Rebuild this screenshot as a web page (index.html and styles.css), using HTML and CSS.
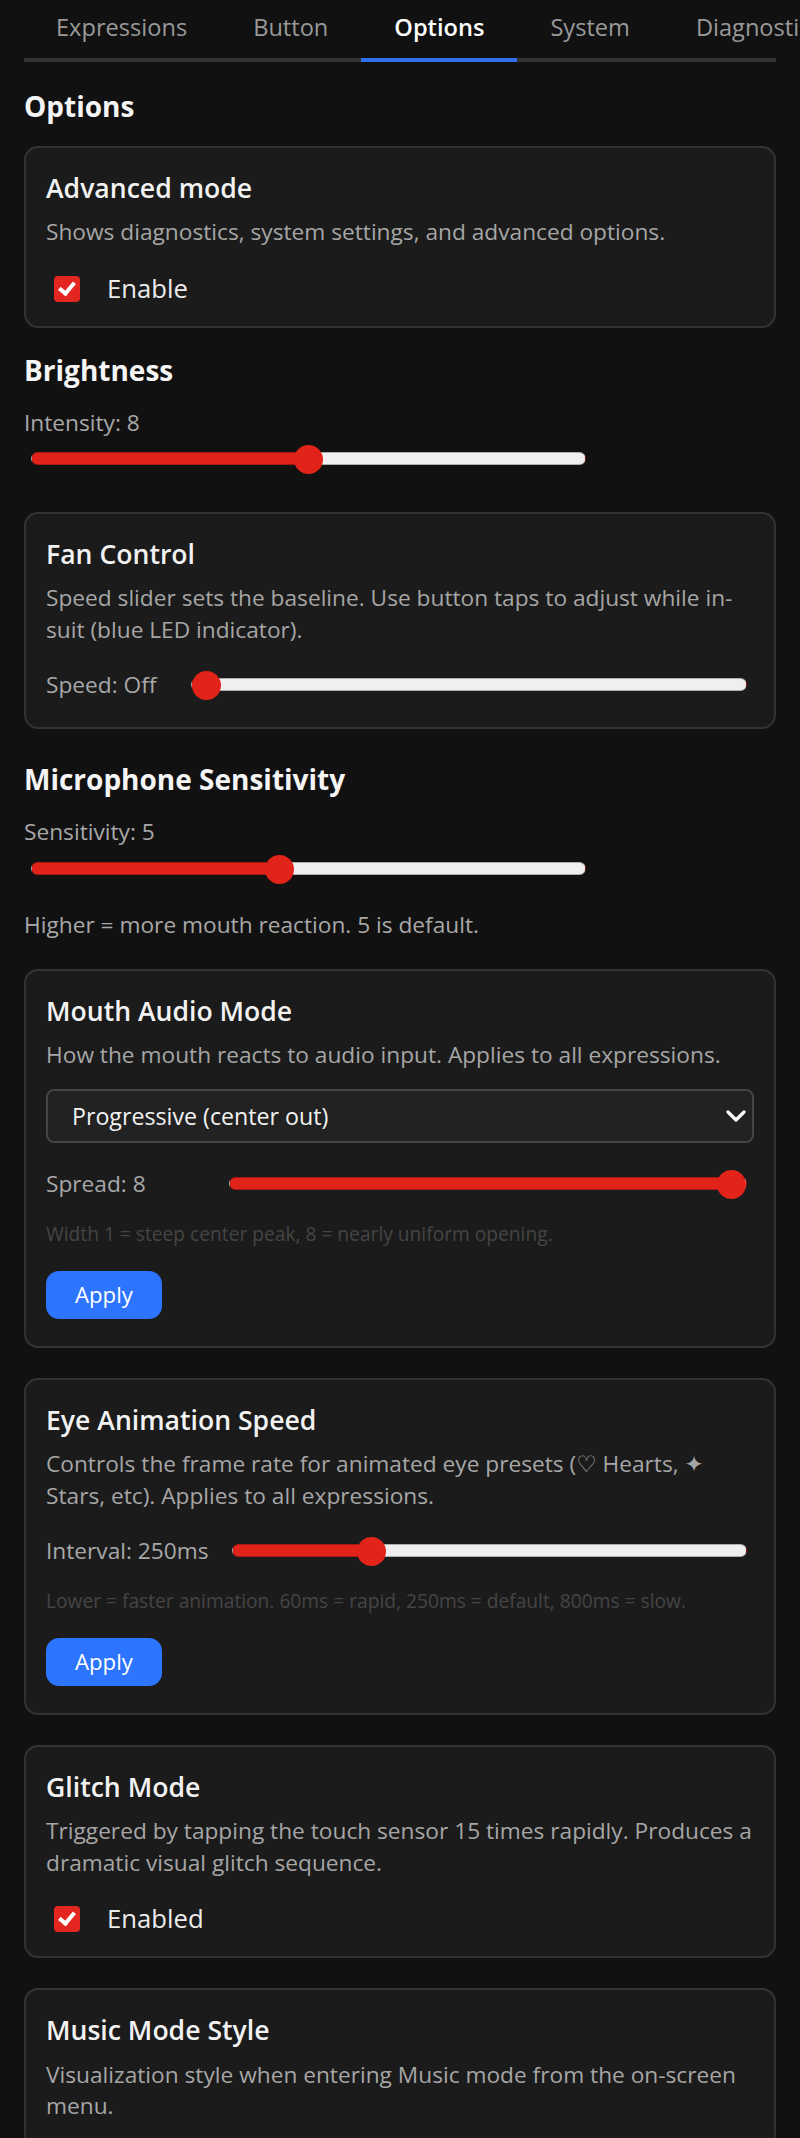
FILE: index.html
```html
<!DOCTYPE html>
<html lang="en">
<head>
    <meta charset="UTF-8">
    <meta name="viewport" content="width=device-width, initial-scale=1.0">
    <title>Options</title>
    <link rel="stylesheet" href="styles.css">
</head>
<body>
    <div class="page">
        <nav class="tabs">
            <a class="tab">Expressions</a>
            <a class="tab">Button</a>
            <a class="tab active">Options</a>
            <a class="tab">System</a>
            <a class="tab">Diagnostics</a>
        </nav>

        <h2 class="section-title page-head">Options</h2>

        <div class="card">
            <h3 class="card-title">Advanced mode</h3>
            <p class="desc">Shows diagnostics, system settings, and advanced options.</p>
            <label class="check-row">
                <input type="checkbox" class="check" checked>
                <span>Enable</span>
            </label>
        </div>

        <section class="group group-brightness">
            <h2 class="section-title">Brightness</h2>
            <div class="label">Intensity: <span>8</span></div>
            <input type="range" class="range range-wide" min="1" max="15" value="8">
        </section>

        <div class="card card-fan">
            <h3 class="card-title">Fan Control</h3>
            <p class="desc">Speed slider sets the baseline. Use button taps to adjust while in-suit (blue LED indicator).</p>
            <div class="slider-row">
                <span class="label label-fan">Speed: Off</span>
                <input type="range" class="range" min="0" max="3" value="0">
            </div>
        </div>

        <section class="group group-mic">
            <h2 class="section-title">Microphone Sensitivity</h2>
            <div class="label">Sensitivity: <span>5</span></div>
            <input type="range" class="range range-wide" min="1" max="10" value="5">
            <p class="label note">Higher = more mouth reaction. 5 is default.</p>
        </section>

        <div class="card card-mouth">
            <h3 class="card-title">Mouth Audio Mode</h3>
            <p class="desc">How the mouth reacts to audio input. Applies to all expressions.</p>
            <div class="select-wrap">
                <select class="select">
                    <option>Progressive (center out)</option>
                    <option>Uniform</option>
                    <option>Wave</option>
                </select>
                <svg class="chevron" width="20" height="12" viewBox="0 0 20 12">
                    <polyline points="2,2 10,10 18,2" fill="none" stroke="#fff" stroke-width="3.2" stroke-linecap="round" stroke-linejoin="round"/>
                </svg>
            </div>
            <div class="slider-row row-spread">
                <span class="label label-spread">Spread: 8</span>
                <input type="range" class="range" min="1" max="8" value="8">
            </div>
            <p class="hint">Width 1 = steep center peak, 8 = nearly uniform opening.</p>
            <button class="btn">Apply</button>
        </div>

        <div class="card">
            <h3 class="card-title">Eye Animation Speed</h3>
            <p class="desc">Controls the frame rate for animated eye presets (♡ Hearts, ✦ Stars, etc). Applies to all expressions.</p>
            <div class="slider-row">
                <span class="label label-interval">Interval: 250ms</span>
                <input type="range" class="range" min="60" max="800" value="250">
            </div>
            <p class="hint">Lower = faster animation. 60ms = rapid, 250ms = default, 800ms = slow.</p>
            <button class="btn">Apply</button>
        </div>

        <div class="card">
            <h3 class="card-title">Glitch Mode</h3>
            <p class="desc">Triggered by tapping the touch sensor 15 times rapidly. Produces a dramatic visual glitch sequence.</p>
            <label class="check-row">
                <input type="checkbox" class="check" checked>
                <span>Enabled</span>
            </label>
        </div>

        <div class="card">
            <h3 class="card-title">Music Mode Style</h3>
            <p class="desc">Visualization style when entering Music mode from the on-screen menu.</p>
        </div>
    </div>

    <script>
        // paint the red part of each slider up to its thumb
        function setFill(range) {
            const f = (range.value - range.min) / (range.max - range.min);
            range.style.setProperty('--fill', f);
        }

        document.querySelectorAll('.range').forEach(r => {
            setFill(r);
            r.addEventListener('input', () => setFill(r));
        });
    </script>
</body>
</html>
```
FILE: styles.css
```css
html {
    scrollbar-width: none;
}

body {
    margin: 0;
    background-color: #111111;
    color: #f2f2f2;
    font-family: "Open Sans", "DejaVu Sans", sans-serif;
    overflow-x: hidden;
}

.page {
    padding: 0 24px;
}

/* tabs */
.tabs {
    display: flex;
    border-bottom: 4px solid #333333;
}

.tab {
    flex: none;
    padding: 11px 33px 15px;
    margin-bottom: -4px;
    border-bottom: 4px solid transparent;
    font-size: 23.6px;
    line-height: 32px;
    color: #999999;
    white-space: nowrap;
    cursor: pointer;
}

.tab:first-child {
    padding-left: 32px;
}

.tab.active {
    color: #ffffff;
    font-weight: 600;
    border-bottom-color: #2f6fee;
}

/* headings */
.section-title {
    margin: 0 0 20px;
    font-size: 28px;
    line-height: 1.2;
    font-weight: 700;
    color: #f5f5f5;
}

.page-head {
    margin: 28px 0 22px;
}

.group-brightness {
    margin-top: 26px;
}

.group-mic {
    margin-top: 34px;
}

/* cards */
.card {
    background: #1b1b1b;
    border: 2px solid #333333;
    border-radius: 14px;
    padding: 24px 20px;
    margin-top: 30px;
}

.page-head + .card {
    margin-top: 0;
}

.card-fan {
    margin-top: 38px;
}

.card-mouth {
    margin-top: 28px;
}

.card-title {
    margin: 0 0 11px;
    font-size: 26.6px;
    line-height: 1.25;
    font-weight: 600;
    color: #f2f2f2;
}

.desc {
    margin: 0;
    font-size: 22.7px;
    line-height: 1.4;
    color: #a6a6a6;
}

.label {
    font-size: 22.7px;
    line-height: 1.4;
    color: #a8a8a8;
}

.note {
    margin: 26px 0 0;
}

.hint {
    margin: 19px 0 0;
    font-size: 19.2px;
    line-height: 1.4;
    color: #454545;
}

/* checkbox */
.check-row {
    display: flex;
    align-items: center;
    margin-top: 28px;
    font-size: 25.7px;
    line-height: 26px;
    color: #ececec;
    cursor: pointer;
}

.check {
    appearance: none;
    -webkit-appearance: none;
    position: relative;
    flex: none;
    width: 26px;
    height: 26px;
    margin: 0 27px 0 8px;
    border-radius: 4px;
    background: #3a3a3a;
    cursor: pointer;
}

.check:checked {
    background: #e3261f;
}

.check:checked::after {
    content: "";
    position: absolute;
    left: 8px;
    top: 3px;
    width: 6px;
    height: 12px;
    border: solid #ffffff;
    border-width: 0 4px 4px 0;
    transform: rotate(40deg);
}

/* sliders */
.range {
    -webkit-appearance: none;
    appearance: none;
    display: block;
    height: 30px;
    margin: 0;
    background: transparent;
    --fill: 0;
}

.range-wide {
    width: 555px;
    margin: 5px 0 0 7px;
}

.range::-webkit-slider-runnable-track {
    height: 13px;
    border: 1px solid rgba(0, 0, 0, 0.27);
    border-radius: 8px;
    background: linear-gradient(to right,
        #e2231a calc(var(--fill) * (100% - 29px) + 14.5px),
        #efefef calc(var(--fill) * (100% - 29px) + 14.5px));
}

.range::-webkit-slider-thumb {
    -webkit-appearance: none;
    width: 29px;
    height: 29px;
    margin-top: -8px;
    border: none;
    border-radius: 50%;
    background: #e2231a;
    cursor: pointer;
}

.slider-row {
    display: flex;
    align-items: center;
    min-height: 36px;
    margin-top: 21px;
}

.slider-row .range {
    flex: 1;
    margin-right: 7px;
}

.row-spread {
    margin-top: 23px;
}

.label-fan {
    width: 145px;
}

.label-spread {
    width: 183px;
}

.label-interval {
    width: 186px;
}

/* select */
.select-wrap {
    position: relative;
    margin-top: 18px;
}

.select {
    -webkit-appearance: none;
    appearance: none;
    display: block;
    width: 100%;
    height: 54px;
    padding: 0 56px 0 24px;
    background: #222222;
    border: 2px solid #444444;
    border-radius: 8px;
    color: #f2f2f2;
    font-family: inherit;
    font-size: 23.2px;
}

.chevron {
    position: absolute;
    right: 8px;
    top: 21px;
    pointer-events: none;
}

/* button */
.btn {
    display: block;
    margin: 23px 0 3px;
    padding: 10px 29px;
    border: none;
    border-radius: 13px;
    background-color: #2d74ff;
    color: #ffffff;
    font-family: inherit;
    font-size: 22.2px;
    line-height: 28px;
    cursor: pointer;
}

.btn:hover {
    background-color: #1f5fd9;
}
```
